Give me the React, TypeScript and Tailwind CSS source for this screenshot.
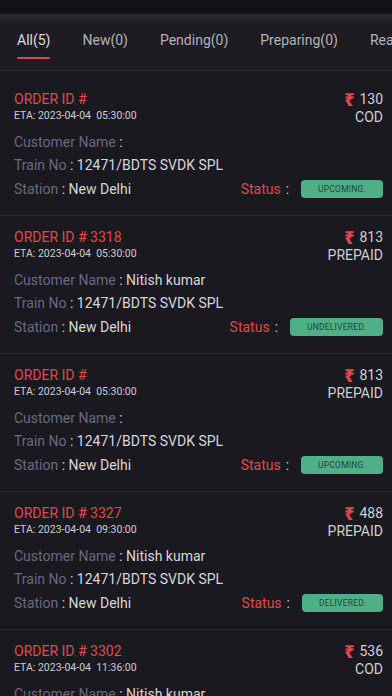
const tabs = ["All(5)", "New(0)", "Pending(0)", "Preparing(0)", "Ready(0)", "Dispatched(0)"];

type Order = {
  id: string;
  eta: string;
  customer: string;
  amount: string;
  mode: string;
  status: string;
};

const orders: Order[] = [
  { id: "", eta: "2023-04-04  05:30:00", customer: "", amount: "130", mode: "COD", status: "UPCOMING." },
  { id: "3318", eta: "2023-04-04  05:30:00", customer: "Nitish kumar", amount: "813", mode: "PREPAID", status: "UNDELIVERED." },
  { id: "", eta: "2023-04-04  05:30:00", customer: "", amount: "813", mode: "PREPAID", status: "UPCOMING." },
  { id: "3327", eta: "2023-04-04  09:30:00", customer: "Nitish kumar", amount: "488", mode: "PREPAID", status: "DELIVERED." },
  { id: "3302", eta: "2023-04-04  11:36:00", customer: "Nitish kumar", amount: "536", mode: "COD", status: "UPCOMING." },
];

function Field({ label, value }: { label: string; value: string }) {
  return (
    <div className="text-[14px] leading-[17px] whitespace-nowrap">
      <span className="text-[#6b6882]">{label}</span>
      <span className="text-[#d6d6da]"> : {value}</span>
    </div>
  );
}

function OrderCard({ o }: { o: Order }) {
  return (
    <div className="border-b border-[#2b2a31] pl-[14px] pr-[9px] pt-[13px] pb-[17px]">
      <div className="flex justify-between">
        <div>
          <div className="text-[14px] leading-[17px] text-[#e0484b]">
            ORDER ID #{o.id ? ` ${o.id}` : ""}
          </div>
          <div className="mt-[1px] text-[10.5px] leading-[14px] text-[#cdcdd2] whitespace-pre">ETA: {o.eta}</div>
        </div>
        <div className="flex flex-col items-end">
          <div className="flex items-center text-[14px] leading-[17px] text-[#cfcfd4]">
            <span className="mr-[5px] font-['Noto_Sans',sans-serif] text-[17px] leading-[17px] font-black text-[#e0484b]">₹</span>
            {o.amount}
          </div>
          <div className="mt-[1px] text-[14px] leading-[17px] text-[#cfcfd4]">{o.mode}</div>
        </div>
      </div>
      <div className="mt-[8px] flex flex-col gap-[6px]">
        <Field label="Customer Name" value={o.customer} />
        <Field label="Train No" value="12471/BDTS SVDK SPL" />
        <div className="flex items-center justify-between">
          <Field label="Station" value="New Delhi" />
          <div className="flex items-center">
            <span className="text-[14px] leading-[17px] text-[#e0484b]">Status</span>
            <span className="ml-[5px] text-[14px] leading-[17px] text-[#cfcfd4]">:</span>
            <span className="ml-[12px] rounded-[4px] bg-[#4fb088] px-[17px] py-[3px] text-[8.5px] leading-[12px] tracking-[0.2px] text-[#244536]">
              {o.status}
            </span>
          </div>
        </div>
      </div>
    </div>
  );
}

export default function App() {
  return (
    <div className="h-[696px] w-[392px] overflow-hidden bg-[#1a1920] font-['Roboto',sans-serif]">
      <div className="h-[14px] bg-[#131217]" />
      <div className="h-[11px] bg-gradient-to-b from-[#2d2c32] to-[#1d1c23]" />
      <div className="border-b border-[#2b2a31] bg-[#1d1c23]">
        <div className="flex gap-[32px] overflow-hidden pl-[17px] pt-[7px] whitespace-nowrap">
          {tabs.map((t, i) => (
            <div key={t} className="flex flex-col items-center">
              <span className={`text-[14px] leading-[17px] ${i === 0 ? "text-[#dcdce0]" : "text-[#b3b3b9]"}`}>{t}</span>
              <span className={`mt-[8px] mb-[11px] h-[2px] w-full rounded-full ${i === 0 ? "bg-[#d9484b]" : "bg-transparent"}`} />
            </div>
          ))}
        </div>
      </div>
      <div className="pt-[7px]">
        {orders.map((o, i) => (
          <OrderCard key={i} o={o} />
        ))}
      </div>
    </div>
  );
}
